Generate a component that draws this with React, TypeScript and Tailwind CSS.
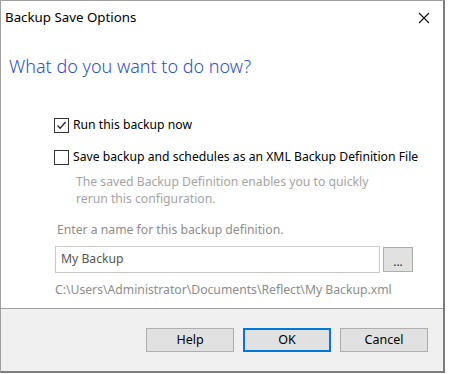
import React from 'react';

const font = { fontFamily: '"Noto Sans", "Open Sans", sans-serif' };

function CheckBox({ checked }: { checked?: boolean }) {
    return (
        <div className="w-[15px] h-[15px] border border-[#333333] bg-white flex items-center justify-center shrink-0">
            {checked && (
                <svg width="11" height="11" viewBox="0 0 11 11" fill="none">
                    <path d="M1.5 5.5 L4.2 8.3 L9.5 2" stroke="#222" strokeWidth="1.3" />
                </svg>
            )}
        </div>
    );
}

function Button({ label, primary }: { label: string; primary?: boolean }) {
    return (
        <button
            className={
                primary
                    ? 'w-[88px] h-[24px] bg-[#e1e1e1] border-2 border-[#0078d7] text-[12.5px] text-black'
                    : 'w-[88px] h-[24px] bg-[#e1e1e1] border border-[#adadad] text-[12.5px] text-black'
            }
        >
            {label}
        </button>
    );
}

export default function App() {
    return (
        <div className="w-[449px] h-[374px] bg-white" style={font}>
            <div className="w-[445px] h-[373px] border-t border-l border-[#a0a0a0] border-r-2 border-b-2 border-r-[#7c7c7c] border-b-[#7c7c7c] flex flex-col">
                <div className="h-[34px] flex items-center justify-between pl-[4px] pr-[13px] shrink-0">
                    <span className="text-[13.3px] text-black">Backup Save Options</span>
                    <svg width="12" height="12" viewBox="0 0 12 12" fill="none">
                        <path d="M1 1 L11 11 M11 1 L1 11" stroke="#111" strokeWidth="1.1" />
                    </svg>
                </div>
                <div className="flex-1 bg-white flex flex-col">
                    <h1 className="mt-[19px] ml-[8px] text-[18px] leading-[24px] text-[#2f52c4] font-light">What do you want to do now?</h1>

                    <div className="mt-[39px] ml-[53px] flex items-center gap-[4px] h-[16px]">
                        <CheckBox checked />
                        <span className="text-[12.2px] text-black">Run this backup now</span>
                    </div>
                    <div className="mt-[16px] ml-[53px] flex items-center gap-[4px] h-[16px]">
                        <CheckBox />
                        <span className="text-[12.2px] text-black">Save backup and schedules as an XML Backup Definition File</span>
                    </div>
                    <p className="mt-[8px] ml-[75px] text-[12.2px] leading-[17px] text-[#a4a4a4] w-[300px]">
                        The saved Backup Definition enables you to quickly rerun this configuration.
                    </p>

                    <p className="mt-[14px] ml-[56px] text-[12.2px] leading-[17px] text-[#8c8c8c]">Enter a name for this backup definition.</p>

                    <div className="mt-[8px] ml-[54px] flex items-center gap-[3px]">
                        <div className="w-[325px] h-[27px] border border-[#c8c8c8] flex items-center px-[5px] text-[12.2px] text-[#555555]">
                            My Backup
                        </div>
                        <button className="w-[30px] h-[25px] bg-[#e1e1e1] border border-[#adadad] text-[12px] leading-[12px] text-[#333] pt-[4px]">...</button>
                    </div>

                    <p className="mt-[8px] ml-[54px] text-[12.2px] leading-[17px] text-[#8c8c8c]">C:\Users\Administrator\Documents\Reflect\My Backup.xml</p>
                </div>
                <div className="h-[63px] bg-[#f0f0f0] border-t border-[#a0a0a0] shrink-0 flex items-start justify-end gap-[9px] pt-[19px] pr-[15px]">
                    <Button label="Help" />
                    <Button label="OK" primary />
                    <Button label="Cancel" />
                </div>
            </div>
        </div>
    );
}
